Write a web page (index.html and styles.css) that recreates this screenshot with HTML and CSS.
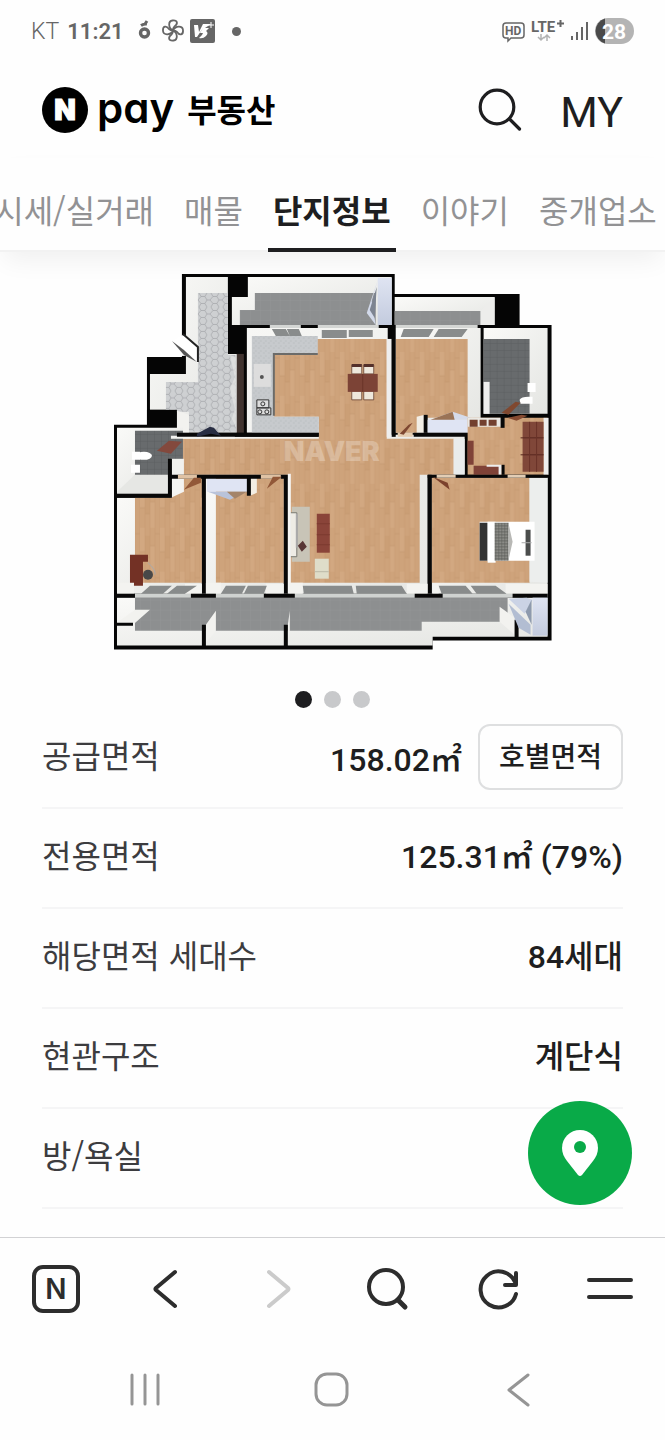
FILE: index.html
```html
<!DOCTYPE html>
<html lang="ko">
<head>
<meta charset="utf-8">
<meta name="viewport" content="width=device-width, initial-scale=1">
<title>N pay 부동산</title>
<link rel="stylesheet" href="styles.css">
</head>
<body>
<div class="app">
  <div class="status">
    <span class="carrier">KT</span>
    <span class="clock">11:21</span>
    <svg class="notif" width="80" height="28" viewBox="137 18 80 28" aria-hidden="true">
      <g fill="none" stroke="#666">
        <circle cx="145.500" cy="34" r="4" stroke-width="3.400"/>
        <path d="M142 26.500q3-2 6-1.500M146 25l2-3" stroke-width="3"/>
        <g stroke-width="1.800" stroke-linejoin="round">
          <path id="blade" d="M174 31.500C169 29 169 22 173.500 21.500C179 21 179 25 175.500 27.500Q174 29 174 31.500"/>
          <use href="#blade" transform="rotate(90 174 31.500)"/>
          <use href="#blade" transform="rotate(180 174 31.500)"/>
          <use href="#blade" transform="rotate(270 174 31.500)"/>
        </g>
      </g>
      <rect x="191" y="20" width="25" height="24" rx="2" fill="#666"/>
      <path d="M195 26h4l1 7 4-8h8l-6 4h4l-3 3q3 2 0 5-3 3-7 2l3-3 1-2h-3l3-5-6 9h-2z" fill="#fff"/><path d="M209 26h6M212 23v6" stroke="#fff"/>
    </svg>
    <span class="more-dot"></span>
    <svg class="signal" width="132" height="28" viewBox="502 17 132 28" role="img" aria-label="HD LTE+ 28%">
      <path d="M506 23h15q3 0 3 3v9q0 3-3 3h-10l-3 3v-3h-2q-3 0-3-3v-9q0-3 3-3z" fill="none" stroke="#666" stroke-width="1.500"/>
      <text x="505" y="35" class="hd">HD</text>
      <text x="531" y="32" class="lte">LTE</text>
      <path d="M557 23.500h7M560.500 20v7" stroke="#666" stroke-width="2"/>
      <path d="M541 34v6m-3-3l3 3 3-3M547 41v-6m-3 3l3-3 3 3" fill="none" stroke="#b2b2b2" stroke-width="1.500"/>
      <path d="M572 36v4M577 32v8M582 27v13M587 22v18" stroke="#666" stroke-width="2"/>
      <rect x="595" y="18" width="39" height="26" rx="13" fill="#b4b4b4"/>
      <path d="M605 18.500a13 13 0 0 0 0 25z" fill="#4a4a4a"/>
      <text x="614" y="39" text-anchor="middle" class="bat">28</text>
    </svg>
  </div>

  <header class="header">
    <a class="brand" href="#" aria-label="N pay 부동산">
      <span class="brand-n">N</span>
      <span class="brand-pay">pay</span>
      <span class="brand-name">부동산</span>
    </a>
    <div class="actions">
      <button class="icon-btn" aria-label="검색">
        <svg width="48" height="48" viewBox="475 86 48 48"><g fill="none" stroke="#1e1e20" stroke-width="3.200" stroke-linecap="round"><circle cx="496" cy="107" r="16.800"/><path d="M508.500 119l10 10"/></g></svg>
      </button>
      <a class="my" href="#">MY</a>
    </div>
  </header>

  <nav class="tabs" aria-label="단지 메뉴">
    <a class="tab" href="#">시세/실거래</a>
    <a class="tab" href="#">매물</a>
    <a class="tab active" href="#" aria-current="page">단지정보</a>
    <a class="tab" href="#">이야기</a>
    <a class="tab" href="#">중개업소</a>
  </nav>

  <main class="content">
    <figure class="plan">
      <svg viewBox="110 270 446 384" role="img" aria-label="평면도">
        <defs>
          <linearGradient id="wall" x1="0" y1="0" x2="1" y2="1"><stop offset="0" stop-color="#fafaf8"/><stop offset="1" stop-color="#e4e5e2"/></linearGradient>
          <linearGradient id="blue" x1="0" y1="0" x2="0" y2="1"><stop offset="0" stop-color="#dfe4f2"/><stop offset="1" stop-color="#c3cbde"/></linearGradient>
          <pattern id="wood" width="20" height="44" patternUnits="userSpaceOnUse">
            <rect width="20" height="44" fill="#cea37b"/><path d="M0 0h5v24h-5zM10 18h5v26h-5z" fill="#d2a881"/><path d="M5 8h5v22h-5z" fill="#cb9f76"/>
            <path d="M5 0v44M10 0v44M15 0v44M20 0v44" stroke="#c59870" stroke-width=".4"/><path d="M0 24h5M10 18h5M5 30h5M15 6h5" stroke="#c0926a" stroke-width=".5"/>
          </pattern>
          <pattern id="hex" width="12" height="14" patternUnits="userSpaceOnUse" patternTransform="translate(198 293)">
            <rect width="12" height="14" fill="#ced0d2"/><path d="M0 7L3 3.500H7L9 7L7 10.500H3zM9 7H12M3 3.500L1 0M7 3.500L9 0M3 10.500L1 14M7 10.500L9 14" fill="none" stroke="#a2a4a7" stroke-width=".7"/>
          </pattern>
          <pattern id="tile" width="10" height="10" patternUnits="userSpaceOnUse"><rect width="10" height="10" fill="#8d8f90"/><path d="M0 0h10M0 0v10" stroke="#989a9b" stroke-width=".5"/></pattern>
          <pattern id="dark" width="7" height="7" patternUnits="userSpaceOnUse"><rect width="7" height="7" fill="#686b6d"/><path d="M0 0h7M0 0v7" stroke="#55585a" stroke-width=".7"/></pattern>
          <pattern id="stone" width="5" height="5" patternUnits="userSpaceOnUse"><rect width="5" height="5" fill="#c7cacd"/><path d="M0 1h2M3 3h2" stroke="#b9bdc0" stroke-width=".9"/></pattern>
          <pattern id="check" width="3" height="3" patternUnits="userSpaceOnUse"><rect width="3" height="3" fill="#a2a29d"/><path d="M0 1h3M1 0v3" stroke="#575854"/></pattern>
        </defs>

        <!-- outer wall -->
        <path d="M182 274H395V294H520V325H552V641H433V650H114V425H147V357H182z" fill="#050505"/>
        <path d="M181 336h6v20h-6z" fill="#fff"/>

        <!-- entrance hall -->
        <path d="M186 277H228V354H237V433H177V410H150V374H186z" fill="url(#wall)"/>
        <path d="M198 293H228V355H236V432H189V412H166V382H198z" fill="url(#hex)"/>
        <path d="M147 410H177V433H147z" fill="#050505"/>
        <path d="M177 411L189 415V433H177z" fill="#f2f2ef"/>
        <path d="M237 354h7v79h-7z" fill="#40332f"/><path d="M230 355l6 2v70l-4-8 3-10-5-20 5-12z" fill="#e5e5e4" opacity=".7"/>
        <path d="M183 335L198 347V363L184 353L172 341" fill="#fff"/><path d="M172 341l12 9 13 12-13-7z" fill="#555"/>
        <path d="M183 334L198 347V362" fill="none" stroke="#222" stroke-width="2"/>

        <!-- north balconies -->
        <path d="M248 277H392V325H232V297H248z" fill="url(#wall)"/><path d="M255 293H376V325H240V310H255z" fill="url(#tile)"/>
        <path d="M378 278h14v47h-14z" fill="url(#blue)"/><path d="M378 280l-11 33 9 12-4-24z" fill="#d2d9e9"/><path d="M377 287l-7 23 5 8z" fill="#7d8491"/>
        <path d="M395 297H495V325H395z" fill="url(#wall)"/><path d="M395 311H481V325H395z" fill="url(#tile)"/><path d="M481 311l14-14v28h-14z" fill="#ededeb"/>

        <!-- kitchen, hall and living room -->
        <path d="M247 328H388V435H465V475H428V594H288V475H171V437H319V433H247z" fill="url(#wall)"/>
        <path d="M274 339H387V439H454V475H420V583H290V475H183V439H319V417H274z" fill="url(#wood)"/>
        <path d="M252 336H318V355H274V417H319V433H252z" fill="url(#stone)"/>
        <path d="M273 354H318M274 354V416" fill="none" stroke="#6b6b69" stroke-width="2"/>
        <rect x="254" y="364" width="17" height="23" fill="#ddd"/><circle cx="262" cy="377" r="2" fill="#555"/>
        <path d="M257 400h12v8h-12zM257 408h14v7h-14z" fill="#ddd" stroke="#333"/>
        <g fill="none" stroke="#333"><circle cx="263" cy="404" r="2"/><circle cx="260" cy="412" r="2"/><circle cx="267" cy="412" r="2"/></g>
        <path d="M247 433H319V437H247z" fill="#080808"/>
        <path d="M270 325h31v3h-31zM318 325h61v3h-61z" fill="#d4d6d4"/>
        <path d="M272 329h14l4 7h-14zM287 329h12l3 7h-12zM322 330h25v8h-25zM349 330h24v7h-24z" fill="#898c8c"/>
        <g fill="#eee8dc" stroke="#654132" stroke-width=".8"><path d="M352 365h10v9h-10zM364 365h10v9h-10zM352 391h10v9h-10zM364 391h10v9h-10z"/></g>
        <path d="M352 364h10v3h-10zM364 364h10v3h-10z" fill="#54302a"/><rect x="348" y="374" width="30" height="18" fill="#7c4336"/><path d="M363 374v18" stroke="#693328"/>
        <path d="M292 507h18v55h-18z" fill="#c8c4b7"/><path d="M290 513h7v44h-7z" fill="#eeece5" stroke="#77776f"/><path d="M297 514v34" stroke="#aaa" stroke-width="2"/><path d="M298 546l5-5 4 6-5 5z" fill="#583636"/>
        <path d="M317 514h13v39h-13z" fill="#8a4439"/><path d="M317 524h13M317 535h13M317 545h13" stroke="#7b3a30"/>
        <path d="M315 559h14v20h-14z" fill="#dfddc9"/><path d="M315 572h14" stroke="#bbb9a8"/>

        <!-- north bedroom -->
        <path d="M395 328H481V433H395z" fill="url(#wall)"/><path d="M396 339H468V418H424V433H396z" fill="url(#wood)"/>
        <path d="M395 325h83v3h-83z" fill="#d4d6d4"/><path d="M404 329h30l-5 8h-28zM439 329h29l-6 8h-28z" fill="#898c8c"/>
        <path d="M387 339h5v98h-5z" fill="#eee"/><path d="M392 325h4v112h-4z" fill="#070707"/>
        <path d="M417 417l8-2v19h-8z" fill="#f2eee6"/><path d="M424 415h4v18h-4z" fill="#080808"/><path d="M428 420h52v13h-52z" fill="#dfe4f3"/>
        <path d="M431 420l22-8 24 8z" fill="#d5dbea"/><path d="M431 420l22-8 2 8z" fill="#9a7356"/>
        <path d="M414 433h67v4h-67z" fill="#080808"/><path d="M398 433h15v4h-15z" fill="#e5cdb2"/><path d="M400 434l9-9 4-2-9 12z" fill="#7e4731"/>

        <!-- east bathroom and dressing room -->
        <path d="M484 328H548V414H484z" fill="url(#wall)"/><path d="M484 339H530V414H484z" fill="url(#dark)"/><path d="M484 382h6v32h-6z" fill="#eee"/>
        <path d="M528 383h8v9h-8zM520 400q2-4 13-3v7h-12z" fill="#fff"/><path d="M502 413l14-11 5 1-12 12z" fill="#80482f"/>
        <path d="M468 418H548V475H468z" fill="url(#wood)"/><path d="M468 418h34v9h-34z" fill="#eae8e3"/><path d="M470 420h8v7h-8zM480 420h7v6h-7zM489 420h8v6h-8z" fill="#72402f"/>
        <path d="M501 415h4v13h-4z" fill="#080808"/><path d="M544 418h5v57h-5z" fill="#eee"/>
        <path d="M523 422h21v50h-21z" fill="#804739"/><path d="M521 438h23M521 455h23" stroke="#57271f"/><path d="M530 422v50M537 422v50" stroke="#693328"/>
        <path d="M508 418l14-3 6 1-11 5z" fill="#854a31"/>
        <path d="M468 441h6v24h-6zM474 466h26v9h-26z" fill="#7f4237"/><path d="M487 465h14v2h-14zM499 465h3v10h-3z" fill="#eee"/><path d="M502 465h3v10h-3z" fill="#080808"/>
        <path d="M454 439h11v36h-11z" fill="#e9ecec"/>

        <!-- east bedroom -->
        <path d="M432 478H548V594H432z" fill="url(#wall)"/><path d="M432 478H530V583H432z" fill="url(#wood)"/><path d="M530 478h18v105l-18-1z" fill="#eceeed"/>
        <path d="M428 475h120v3h-120z" fill="#080808"/><path d="M437 475h19v3h-19zM508 475h18v3h-18z" fill="#e2cdb5"/><path d="M433 477l15 6 2 7z" fill="#7b412c"/>
        <path d="M480 522h55v39h-55z" fill="#fff"/><path d="M480 523h8v38h-8z" fill="#333"/><path d="M488 522h8v41h-8z" fill="#fff"/><path d="M495 523h14v38h-14z" fill="url(#check)"/><path d="M509 524l4 18-4 18z" fill="#b8b8b5"/><path d="M526 530h5v26h-5z" fill="#4b4d4c"/><path d="M522 543h10" stroke="#aaa"/>

        <!-- west bathroom -->
        <path d="M117 428H183V475H171V494H117z" fill="url(#wall)"/><path d="M135 431H183V477H135z" fill="url(#dark)"/><path d="M117 492l18-17h33v19h-51z" fill="#e6e7e4"/>
        <path d="M132 452h8v8h-8zM131 465h9v8h-9z" fill="#fff"/><ellipse cx="144" cy="456" rx="8" ry="4" fill="#fff"/>
        <path d="M171 459h13v19h-13z" fill="#f1f1ee"/><path d="M171 436h64v3h-64z" fill="#f4f4f1"/><path d="M177 433h70v4h-70z" fill="#080808"/>
        <path d="M157 451l12-10 13 1-11 12z" fill="#83493d"/>
        <path d="M197 434l13-7 4 1 7 8-10-2-14 3z" fill="#292e43"/>

        <!-- west bedrooms -->
        <path d="M117 498H202V594H117z" fill="url(#wall)"/><path d="M135 498H172V478H202V583H135z" fill="url(#wood)"/><path d="M171 478h13v14l-13 6z" fill="#f4f4f2"/>
        <path d="M130 555h18v7h-5v24h-13z" fill="#733125"/><circle cx="148" cy="575" r="5" fill="#484848"/><path d="M148 563q8 7 7 12" stroke="#aaa" fill="none"/>
        <path d="M205 478H284V594H205z" fill="url(#wall)"/><path d="M216 478H284V583H216z" fill="url(#wood)"/>
        <path d="M207 479h41v13h-41z" fill="#dfe4f3"/><path d="M208 492h39l-17 8z" fill="#b9c3da"/><path d="M227 492h20l-12 7z" fill="#a48469"/><path d="M250 478h7v15l-7 3z" fill="#f3eee4"/>
        <path d="M114 494h57v4h-57zM168 459h4v39h-4zM171 475h118v4h-118zM202 475h4v122h-4zM284 475h4v122h-4zM247 479h4v17h-4z" fill="#080808"/>
        <path d="M178 475h19v4h-19zM261 475h20v4h-20z" fill="#dfc2a4"/><path d="M184 490l10-12h7v5zM267 489l6-12h9z" fill="#925838"/>
        <path d="M288 474h3v120h-3z" fill="#f7f7f5"/><path d="M428 475h4v122h-4z" fill="#080808"/>

        <!-- south windows and balcony -->
        <path d="M117 598H548V637H433V646H117z" fill="url(#wall)"/>
        <path d="M135 598H508V622H422V631H135z" fill="url(#tile)"/>
        <path d="M117 594h431v4h-431z" fill="#cfd2d0"/>
        <path d="M117 583h17v11h-17zM185 584h17v10h-17zM206 583h15v11h-15zM266 584h18v10h-18zM289 583h14v11h-14zM407 584h21v10h-21zM433 584h6v10h-6zM506 584h42v10h-42z" fill="#f3f3f0"/>
        <path d="M150 586h22l-9 8h-22zM177 586h20l-12 8h-18zM226 586h20l-4 8h-21zM248 586h19l-3 8h-20zM303 586h49l2 8h-50zM356 586h46l5 8h-50zM439 586h27l7 8h-31zM471 586h25l11 8h-30z" fill="#888b8b"/>
        <path d="M114 594h21v4h-21zM191 594h25v4h-25zM264 594h31v4h-31zM415 594h28v4h-28zM513 594h35v4h-35z" fill="#080808"/>
        <path d="M117 623l18-13h15l-17 15zM206 625l10-14v20l-10 12zM288 625l2-14v20l-2 12zM500 607l15 11v17l-15-13z" fill="#f2f2ef"/>
        <path d="M114 623h19v3h-19zM202 625h4v22h-4zM284 625h4v22h-4zM515 620h4v18h-4z" fill="#080808"/>
        <path d="M533 598h15v38h-15z" fill="url(#blue)"/><path d="M509 599l18-1 6 2-8 14z" fill="#cbd3e5"/><path d="M509 604l22 21v10l-12-7z" fill="#b2bdd2"/><path d="M526 612l6-12v25z" fill="#8e9aad"/>
        <text x="332" y="461" text-anchor="middle" class="watermark">NAVER</text>
      </svg>
    </figure>

    <div class="dots" aria-label="평면도 이미지 선택">
      <button class="dot on" aria-label="1"></button><button class="dot" aria-label="2"></button><button class="dot" aria-label="3"></button>
    </div>

    <dl class="info">
      <div class="row first"><dt>공급면적</dt><dd>158.02㎡</dd><dd><button class="unit-btn">호별면적</button></dd></div>
      <div class="row"><dt>전용면적</dt><dd>125.31㎡ (79%)</dd></div>
      <div class="row"><dt>해당면적 세대수</dt><dd>84세대</dd></div>
      <div class="row"><dt>현관구조</dt><dd>계단식</dd></div>
      <div class="row"><dt>방/욕실</dt><dd></dd></div>
    </dl>
    <button class="fab" aria-label="지도에서 보기">
      <svg width="40" height="50" viewBox="559 1129 40 50"><path d="M579 1131a18 18 0 0 0-18 18c0 5 2 9 5 13l11 14q2 2 4 0l11-14c3-4 5-8 5-13a18 18 0 0 0-18-18z" fill="#fff"/><circle cx="579" cy="1148" r="6" fill="#09aa48"/></svg>
    </button>
  </main>

  <nav class="toolbar" aria-label="브라우저 도구">
    <button class="tool" aria-label="홈"><span class="home-n">N</span></button>
    <button class="tool" aria-label="뒤로"><svg width="48" height="48"><path d="M32 7L13 23q-1 1 0 2L32 41" class="line"/></svg></button>
    <button class="tool" aria-label="앞으로" disabled><svg width="48" height="48"><path d="M16 7L35 23q1 1 0 2L16 41" class="line off"/></svg></button>
    <button class="tool" aria-label="검색"><svg width="48" height="48"><circle cx="22" cy="22" r="17" class="line"/><path d="M34 35l7 7" class="line thick"/></svg></button>
    <button class="tool" aria-label="새로고침"><svg width="48" height="48"><path d="M42 29A18 18 0 1 1 41 17M42 8V20H31" class="line"/></svg></button>
    <button class="tool" aria-label="메뉴"><svg width="48" height="48"><path d="M4 15H46M4 32H46" class="line"/></svg></button>
  </nav>

  <nav class="system" aria-label="시스템 탐색">
    <button class="sys" aria-label="최근 앱"><svg width="40" height="40"><path d="M7 5V34M20 5V34M33 5V34" class="sys-line"/></svg></button>
    <button class="sys" aria-label="홈 화면"><svg width="40" height="40"><rect x="4" y="4" width="31" height="31" rx="11" class="sys-line"/></svg></button>
    <button class="sys" aria-label="이전"><svg width="40" height="40"><path d="M30 5L11 20L30 35" class="sys-line"/></svg></button>
  </nav>
</div>
</body>
</html>
```

FILE: styles.css
```css
* { box-sizing: border-box; }
body { margin: 0; background: #fefefe; color: #1e1e20; font-family: Roboto, "Noto Sans CJK KR", sans-serif; }
button { padding: 0; border: 0; background: none; color: inherit; font: inherit; cursor: pointer; }
a { color: inherit; text-decoration: none; }
svg { display: block; }
.app { display: flex; flex-direction: column; min-height: 100vh; overflow: hidden; }

.status { display: flex; align-items: center; height: 62px; padding: 0 31px; color: #666; font-size: 23px; }
.carrier { font-weight: 300; }
.clock { margin: 0 12px 0 8px; font-size: 22px; font-weight: 600; }
.more-dot { width: 9px; height: 9px; margin-left: 16px; border-radius: 50%; background: #666; }
.signal { margin-left: auto; }
.hd { font: 700 12px Roboto, sans-serif; fill: #666; }
.lte { font: 700 15px Roboto, sans-serif; fill: #666; }
.bat { font: 700 21px Roboto, sans-serif; fill: #fff; }

.header { display: flex; align-items: center; justify-content: space-between; height: 96px; padding: 0 42px; }
.brand { display: flex; align-items: center; color: #000; }
.brand-n { display: flex; align-items: center; justify-content: center; width: 46px; height: 46px; border-radius: 50%; background: #000; color: #fff; font: 900 28px/1 Inter, sans-serif; -webkit-text-stroke: 1px #fff; }
.brand-pay { margin: 0 13px 4px 9px; font: 600 42px/48px Inter, sans-serif; font-feature-settings: "cv11"; }
.brand-name { padding-bottom: 4px; font: 700 32px/48px "Noto Sans CJK KR", sans-serif; }
.actions { display: flex; align-items: center; gap: 36px; }
.my { padding-top: 4px; font-size: 43px; line-height: 48px; }

.tabs { position: relative; display: flex; justify-content: center; gap: 20px; height: 94px; padding: 12px 14px 0 0; border-bottom: 2px solid #f2f2f2; background: #fefefe; box-shadow: 0 12px 24px -4px rgba(0, 0, 0, .06); white-space: nowrap; font: 400 32px/78px "Noto Sans CJK KR", sans-serif; color: #929294; }
.tab { flex: none; height: 82px; padding: 0 5px; }
.tab.active { border-bottom: 4px solid #1e1e20; color: #1e1e20; font-weight: 700; }

.content { position: relative; flex: 1; padding-top: 18px; }
.plan { width: 67%; margin: 0 auto; }
.plan svg { width: 100%; height: auto; }
.watermark { font: 900 27px Inter, sans-serif; fill: #fff; opacity: .25; }
.dots { display: flex; justify-content: center; gap: 12px; margin-top: 37px; }
.dot { width: 17px; height: 17px; border-radius: 50%; background: #c8c9cb; }
.dot.on { background: #1e1e20; }

.info { margin: 1px 42px 0; }
.row { display: flex; align-items: center; height: 100px; padding-bottom: 8px; border-bottom: 2px solid #f5f5f6; font-size: 32px; }
.row.first { padding-bottom: 0; }
.row dt { flex: 1; color: #3c3c3f; font-family: "Noto Sans CJK KR", sans-serif; }
.row.first dt { padding-bottom: 8px; }
.row dd { margin: 0; font-weight: 500; }
.row.first dd { padding-bottom: 2px; }
.unit-btn { height: 66px; margin-left: 16px; padding: 0 19px 4px; border: 2px solid #dedfe0; border-radius: 12px; font: 500 28px/1 "Noto Sans CJK KR", sans-serif; }
.fab { position: absolute; right: 33px; bottom: 32px; display: flex; align-items: center; justify-content: center; width: 104px; height: 104px; border-radius: 50%; background: #09aa48; }

.toolbar { display: flex; align-items: center; justify-content: space-between; height: 103px; padding: 0 32px; border-top: 1px solid #d2d2d4; }
.line { fill: none; stroke: #2d2d2d; stroke-width: 4; stroke-linecap: round; stroke-linejoin: round; }
.line.off { stroke: #cbcbcb; }
.line.thick { stroke-width: 5; }
.home-n { display: flex; align-items: center; justify-content: center; width: 48px; height: 48px; border: 4px solid #2d2d2d; border-radius: 11px; color: #2d2d2d; font: 600 28px/1 Inter, sans-serif; }
.system { display: flex; justify-content: space-between; align-items: center; height: 100px; padding: 0 127px 0 125px; }
.sys-line { fill: none; stroke: #959595; stroke-width: 3; stroke-linecap: round; stroke-linejoin: round; }
```
